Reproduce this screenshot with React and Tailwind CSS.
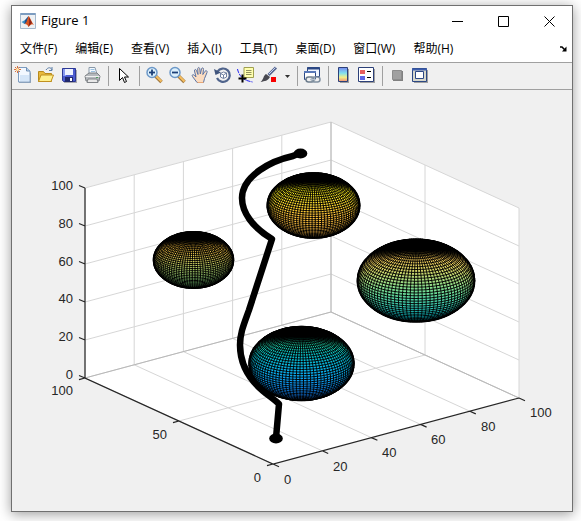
import React from "react";

const menus = [
  "文件(F)",
  "编辑(E)",
  "查看(V)",
  "插入(I)",
  "工具(T)",
  "桌面(D)",
  "窗口(W)",
  "帮助(H)",
];

// Screen position of a data point, every axis runs from 0 to 100
const project = (x, y, z) => [
  273 + 2.46 * x - 1.88 * y,
  464 - 0.66 * x - 0.86 * y - 1.9 * z,
];

const segment = (a, b) => {
  const [x1, y1] = project(...a);
  const [x2, y2] = project(...b);
  return `M${x1.toFixed(1)} ${y1.toFixed(1)}L${x2.toFixed(1)} ${y2.toFixed(1)}`;
};

const steps = [0, 20, 40, 60, 80, 100];

const spheres = [
  {
    id: "north",
    cx: 313.5,
    cy: 205.5,
    r: 15,
    colors: ["#fff81c", "#fcea28", "#ffc23a", "#f8b848"],
  },
  {
    id: "west",
    cx: 193.5,
    cy: 260,
    r: 13,
    colors: ["#ffc440", "#f0c84c", "#b8d46c", "#78d080"],
  },
  {
    id: "east",
    cx: 416,
    cy: 280.5,
    r: 19,
    colors: ["#f4c858", "#d4d468", "#6cdc98", "#08b4c4"],
  },
  {
    id: "south",
    cx: 301.5,
    cy: 363.5,
    r: 17,
    colors: ["#20cca0", "#08bcc4", "#0aa8ec", "#147cf4"],
  },
];

const MERIDIANS = 92;
const PARALLELS = 44;

// Only the half that faces the viewer is drawn
const meshPath = (cx, cy, r) => {
  let d = "";
  const trace = (points) => {
    let open = false;
    points.forEach(([lon, lat]) => {
      const x = Math.cos(lat) * Math.cos(lon);
      const y = Math.cos(lat) * Math.sin(lon);
      const z = Math.sin(lat);
      const visible = -1.88 * x - 2.46 * y + 1.767 * z > 0;
      if (visible) {
        const px = cx + r * (2.46 * x - 1.88 * y);
        const py = cy + r * (-0.66 * x - 0.86 * y - 1.9 * z);
        d += `${open ? "L" : "M"}${px.toFixed(1)} ${py.toFixed(1)}`;
      }
      open = visible;
    });
  };
  for (let i = 0; i < MERIDIANS; i++) {
    const lon = (i / MERIDIANS) * 2 * Math.PI;
    const points = [];
    for (let j = 0; j <= 48; j++) {
      points.push([lon, (j / 48 - 0.5) * Math.PI]);
    }
    trace(points);
  }
  for (let j = 1; j < PARALLELS; j++) {
    const lat = (j / PARALLELS - 0.5) * Math.PI;
    const points = [];
    for (let i = 0; i <= 96; i++) {
      points.push([(i / 96) * 2 * Math.PI, lat]);
    }
    trace(points);
  }
  return d;
};

const Sphere = ({ id, cx, cy, r, colors }) => {
  const rx = r * 3.1;
  const ry = r * 2.19;
  return (
    <g>
      <linearGradient id={id} x1="0" y1="0" x2="0" y2="1">
        <stop offset="0.13" stopColor="#000" />
        <stop offset="0.24" stopColor={colors[0]} />
        <stop offset="0.38" stopColor={colors[1]} />
        <stop offset="0.65" stopColor={colors[2]} />
        <stop offset="0.95" stopColor={colors[3]} />
      </linearGradient>
      <ellipse cx={cx} cy={cy} rx={rx} ry={ry} fill={`url(#${id})`} />
      <path
        d={meshPath(cx, cy, r)}
        fill="none"
        stroke="#000"
        strokeWidth="0.95"
      />
      <ellipse
        cx={cx}
        cy={cy}
        rx={rx - 0.5}
        ry={ry - 0.5}
        fill="none"
        stroke="#000"
        strokeWidth="2"
      />
    </g>
  );
};

const Label = ({ x, y, end, children }) => (
  <text x={x} y={y} textAnchor={end ? "end" : "start"}>
    {children}
  </text>
);

const Plot = () => {
  const grid = [
    ...steps.map((x) => segment([x, 100, 0], [x, 100, 100])),
    ...steps.map((x) => segment([x, 0, 0], [x, 100, 0])),
    ...steps.map((z) => segment([0, 100, z], [100, 100, z])),
    ...steps.map((z) => segment([100, 0, z], [100, 100, z])),
    segment([0, 50, 0], [100, 50, 0]),
    segment([100, 50, 0], [100, 50, 100]),
    segment([100, 0, 0], [100, 0, 100]),
  ].join("");

  const xTicks = steps.map((x) => {
    const [px, py] = project(x, 0, 0);
    return `M${px} ${py}l6 2.7`;
  });
  const yTicks = [0, 50, 100].map((y) => {
    const [px, py] = project(0, y, 0);
    return `M${px} ${py}l-6 1.7`;
  });
  const zTicks = steps.map((z) => {
    const [px, py] = project(0, 100, z);
    return `M${px} ${py}l-6 -2.5`;
  });

  return (
    <svg
      viewBox="12 90 560 421"
      className="h-full w-full font-['Liberation_Sans',Arial,sans-serif] text-[13px]"
      role="img"
      aria-label="3D plot"
    >
      <path
        d="M85 188L331 122L519 208V398L273 464L85 378Z"
        fill="#fff"
      />
      <path d={grid} fill="none" stroke="#d6d6d6" strokeWidth="1" />
      <path
        d="M85 378L331 312L519 398M331 312V122"
        fill="none"
        stroke="#b8b8b8"
        strokeWidth="1"
      />
      <path
        d={`M85 188V378L273 464L519 398${xTicks.join("")}${yTicks.join(
          ""
        )}${zTicks.join("")}`}
        fill="none"
        stroke="#262626"
        strokeWidth="1.2"
      />

      <g fill="#262626">
        <Label x="73" y="190" end>100</Label>
        <Label x="73" y="228" end>80</Label>
        <Label x="73" y="266" end>60</Label>
        <Label x="73" y="303" end>40</Label>
        <Label x="73" y="341" end>20</Label>
        <Label x="73" y="379" end>0</Label>
        <Label x="73" y="395" end>100</Label>
        <Label x="167" y="439" end>50</Label>
        <Label x="261" y="482" end>0</Label>
        <Label x="284" y="484">0</Label>
        <Label x="333" y="471">20</Label>
        <Label x="382" y="457">40</Label>
        <Label x="431" y="444">60</Label>
        <Label x="481" y="431">80</Label>
        <Label x="530" y="417">100</Label>
      </g>

      {spheres.map((s) => (
        <Sphere key={s.id} {...s} />
      ))}

      <path
        d="M300 153L293 156C284 158 270 163 260 170C250 177 242 187 242 198C242 212 252 227 272 239L249 310C244 324 240 333 240 345C240 364 250 380 263 391C269 396 275 400 279 404L276 438"
        fill="none"
        stroke="#000"
        strokeWidth="6.5"
        strokeLinejoin="round"
      />
      <ellipse cx="300.5" cy="153.5" rx="6.8" ry="5" />
      <ellipse cx="276" cy="438.5" rx="6.8" ry="5" />
    </svg>
  );
};

const Icon = ({ children }) => (
  <svg width="18" height="18" viewBox="0 0 18 18" fill="none">
    {children}
  </svg>
);

const NewIcon = () => (
  <Icon>
    <path d="M5 3h8l4 4v10H5z" fill="#9aa8b8" />
    <path d="M4.500 1.500h8l3.500 3.500v11h-11.500z" fill="#f2f8ff" stroke="#7d9cc0" />
    <path d="M6 9h9v6H6z" fill="#d5e6f8" />
    <path d="M12.500 1.500v3.500h3.500" fill="#b7cfe8" stroke="#6f8fb5" />
    <path d="M3.500 0v7M0 3.500h7M1 1l5 5M6 1L1 6" stroke="#d9703c" />
    <circle cx="3.500" cy="3.500" r="1.500" fill="#ffe6a8" />
  </Icon>
);

const OpenIcon = () => (
  <Icon>
    <path d="M9 4c2-3 5-3 6 0M15 1v3.500h-3" stroke="#5c7ea8" />
    <path d="M1.500 15.500v-10h5l1.500 2h6.500v8z" fill="#e8b93c" stroke="#b88a1c" />
    <path d="M1.500 15.500l2.500-6.500h12.500l-2.500 6.500z" fill="#fff08c" stroke="#c09020" />
  </Icon>
);

const SaveIcon = () => (
  <Icon>
    <path d="M4 4h13v13H4z" fill="#a8a8b0" />
    <path d="M2.500 2.500h13v13h-12l-1-1z" fill="#4c5cd0" stroke="#2c3894" />
    <path d="M3 3h3v7H3z" fill="#8898f0" />
    <path d="M5 3h8v6H5z" fill="#eef2ff" />
    <path d="M5 11h8v5H5z" fill="#20286c" />
    <path d="M10 12h2v3h-2z" fill="#fff" />
  </Icon>
);

const PrintIcon = () => (
  <Icon>
    <path d="M6 1.500h6l2 6.500H6z" fill="#f4faff" stroke="#8898a8" />
    <path d="M7.500 3.500h4M8 5.500h4" stroke="#9ac0e0" />
    <path d="M2 10l4-3h8l3 3-1 5H3z" fill="#b4b8bc" stroke="#7c8084" />
    <path d="M2.500 10.500h14" stroke="#f0f0f0" />
    <path d="M5 13h9l1 3.500H4z" fill="#e8e8e8" stroke="#808488" />
    <path d="M13 11.500h2" stroke="#50a060" />
  </Icon>
);

const PointerIcon = () => (
  <Icon>
    <path
      d="M5.500 2.500v12l3-3 2 5 2-1-2-4.500h4z"
      fill="#fff"
      stroke="#000"
    />
  </Icon>
);

const ZoomIcon = ({ plus }) => (
  <Icon>
    <path d="M10.500 10l6 6" stroke="#a07840" strokeWidth="3.500" />
    <path d="M11 10l5.500 5.500" stroke="#f8c060" strokeWidth="1.800" />
    <circle cx="7" cy="6.500" r="5" fill="#dcf0fc" stroke="#6c98c8" strokeWidth="1.500" />
    <path d="M4 6.500h6" stroke="#1c4078" strokeWidth="1.800" />
    {plus && <path d="M7 3.500v6" stroke="#1c4078" strokeWidth="1.800" />}
  </Icon>
);

const HandIcon = () => (
  <Icon>
    <path
      d="M6 16.500L1.500 10.500C.5 9 2 8 3.200 9.200L5 11 3.500 5C3.200 3.200 5 3 5.500 4.500L7 8.500 6.700 3C6.700 1 8.600 1 8.800 3L9.300 8 10.500 3C11 1.200 12.800 1.700 12.500 3.500L11.800 8.500 14 5.300C15 4 16.700 5 16 6.500L13.500 12.500 12.500 16.500z"
      fill="#fbdcc0"
      stroke="#5c74a4"
    />
    <path d="M6.500 16.500h6" stroke="#e8a878" />
  </Icon>
);

const RotateIcon = () => (
  <Icon>
    <path d="M3.500 5.500A6.700 6.700 0 1 1 3 12" stroke="#50648c" strokeWidth="2.200" />
    <path d="M0 3l1.500 6L7 6.500z" fill="#40547c" />
    <path d="M6.500 7.500l3-1.500 3 1v4l-3 1.500-3-1.500zM6.500 7.500l3 1.500v3M9.500 9l3-2" fill="#fff" stroke="#50648c" strokeWidth="0.800" />
  </Icon>
);

const DataCursorIcon = () => (
  <Icon>
    <path d="M.5 3c1 5 4 9 8 11 2 1 5 1.500 7 2" stroke="#2020f0" strokeDasharray="4 1" />
    <path d="M7 1.500h9.500v10H7z" fill="#ffffb0" stroke="#a0a050" />
    <path d="M9 4.500h5.500M9 6.500h5.500M9 8.500h5.500" stroke="#909060" />
    <path d="M1.500 12.500h8M5.500 8.500v8" stroke="#000" strokeWidth="2" />
  </Icon>
);

const BrushIcon = () => (
  <Icon>
    <path d="M16 1.500L8.500 9" stroke="#586890" strokeWidth="3" />
    <path d="M15.500 1.500L9 8" stroke="#c4d0f0" />
    <path d="M6 8l4 3c-2 4-5 4-9.500 5C4 13 3 10 6 8z" fill="#484850" />
    <path d="M11 11h5v5h-5z" fill="#f80000" />
  </Icon>
);

const LinkIcon = () => (
  <Icon>
    <path d="M4.500 1.500h12v9h-12z" fill="#f0f6ff" stroke="#2c4884" />
    <path d="M4 2.500h13" stroke="#2c4884" strokeWidth="2" />
    <path d="M1.500 5.500h11v8h-11z" fill="#fff" stroke="#2c4884" />
    <path d="M1 6h12" stroke="#5878b8" strokeWidth="2" />
    <rect x="3" y="11" width="8" height="5" rx="2.500" fill="#f0f0f0" stroke="#6c7c8c" strokeWidth="1.500" />
    <rect x="9" y="11" width="8" height="5" rx="2.500" stroke="#8090a0" strokeWidth="1.500" />
    <path d="M7 13.500h6" stroke="#b4c0cc" strokeWidth="1.500" />
  </Icon>
);

const ColorbarIcon = () => (
  <Icon>
    <linearGradient id="bar" x1="0" y1="0" x2="0" y2="1">
      <stop offset="0" stopColor="#7888f0" />
      <stop offset="0.4" stopColor="#80e0f0" />
      <stop offset="0.7" stopColor="#f4f088" />
      <stop offset="1" stopColor="#f09078" />
    </linearGradient>
    <path d="M6 3h9v14H6z" fill="#a0a0a0" />
    <path d="M4.500 1.500h9v14h-9z" fill="url(#bar)" stroke="#2c4078" />
  </Icon>
);

const LegendIcon = () => (
  <Icon>
    <path d="M3 3h15v14H3z" fill="#a0a0a0" />
    <path d="M1.500 1.500h15v14h-15z" fill="#fff" stroke="#2c4078" />
    <path d="M3 4h5v4H3z" fill="#e86060" />
    <path d="M3 10h5v4H3z" fill="#6068e8" />
    <path d="M10 5.500h4M10 11.500h4" stroke="#000" />
  </Icon>
);

const HideToolsIcon = () => (
  <Icon>
    <path d="M5 5h10v10H5z" fill="#808080" />
    <path d="M4.500 4.500h9v9h-9z" fill="#a0a0a0" stroke="#8c8c8c" />
  </Icon>
);

const ShowToolsIcon = () => (
  <Icon>
    <path d="M3 4h14v13H3z" fill="#a0a0a0" />
    <path d="M1.500 2.500h14v13h-14z" fill="#d8d8cc" stroke="#2c4884" />
    <path d="M1 3.500h15" stroke="#3c5cac" strokeWidth="2" />
    <path d="M4.500 5.500h8v7h-8z" fill="#fff" stroke="#2c4884" />
  </Icon>
);

const Logo = () => (
  <svg width="16" height="16" viewBox="0 0 16 16" aria-hidden="true">
    <path d="M.5.500h15v15H.5z" fill="#eef1f4" stroke="#a4b8cc" />
    <path d="M.5 1h15" stroke="#7c9cc0" strokeWidth="2" />
    <path d="M1.500 9l3.500-2 2 1.500L4.500 11z" fill="#3c94c8" />
    <path d="M5 7l3.500-4-1.500 7-2.500 1z" fill="#20508c" />
    <path d="M8.500 3c1.500 1 3 6 5.500 9-2-1.500-3-1-5.500 2-.5-1.500-1.500-3-4-3 2-.5 3-5 4-8z" fill="#d85420" />
    <path d="M8.500 3c1 2 1 6 0 11 2-3 3-4 3.500-4z" fill="#8c2418" />
  </svg>
);

const ToolButton = ({ label, children }) => (
  <button
    type="button"
    aria-label={label}
    className="flex h-6 w-[23px] shrink-0 items-start pl-0.5 pt-0.5 hover:bg-gray-200"
  >
    {children}
  </button>
);

const Separator = () => (
  <div className="flex h-5 w-2 shrink-0 justify-center">
    <div className="w-px bg-[#a0a0a0]" />
  </div>
);

const WindowButton = ({ label, children }) => (
  <button
    type="button"
    aria-label={label}
    className="flex w-[46px] items-center justify-center hover:bg-gray-200"
  >
    <svg width="11" height="11" viewBox="0 0 11 11" fill="none" stroke="#000">
      {children}
    </svg>
  </button>
);

const TitleBar = () => (
  <header className="flex h-[30px] shrink-0 bg-white pl-2">
    <div className="flex flex-1 items-center gap-[5px]">
      <Logo />
      <h1 className="text-[13px]">Figure 1</h1>
    </div>
    <WindowButton label="Minimize">
      <path d="M0 5.500h11" />
    </WindowButton>
    <WindowButton label="Maximize">
      <path d="M.5.500h10v10H.5z" />
    </WindowButton>
    <WindowButton label="Close">
      <path d="M.5.500l10 10M10.500.500l-10 10" />
    </WindowButton>
  </header>
);

const MenuBar = () => (
  <nav className="flex h-[27px] shrink-0 items-center border-b border-[#a0a0a0] bg-white pr-1 pl-2">
    <div className="flex flex-1 gap-[18px]">
      {menus.map((menu) => (
        <button key={menu} type="button" className="text-xs whitespace-nowrap">
          {menu}
        </button>
      ))}
    </div>
    <button type="button" aria-label="Dock">
      <svg width="9" height="8" viewBox="0 0 9 8" fill="none">
        <path d="M1 2h2l3.500 3.500" stroke="#000" strokeWidth="1.500" />
        <path d="M7.500 1.500v5H3z" fill="#000" />
      </svg>
    </button>
  </nav>
);

const ToolBar = () => (
  <div
    role="toolbar"
    className="flex h-[27px] shrink-0 items-center border-b border-[#a0a0a0] bg-[#f0f0f0]"
  >
    <ToolButton label="New"><NewIcon /></ToolButton>
    <ToolButton label="Open"><OpenIcon /></ToolButton>
    <ToolButton label="Save"><SaveIcon /></ToolButton>
    <ToolButton label="Print"><PrintIcon /></ToolButton>
    <Separator />
    <ToolButton label="Select"><PointerIcon /></ToolButton>
    <Separator />
    <ToolButton label="Zoom in"><ZoomIcon plus /></ToolButton>
    <ToolButton label="Zoom out"><ZoomIcon /></ToolButton>
    <ToolButton label="Pan"><HandIcon /></ToolButton>
    <ToolButton label="Rotate"><RotateIcon /></ToolButton>
    <ToolButton label="Data cursor"><DataCursorIcon /></ToolButton>
    <ToolButton label="Brush"><BrushIcon /></ToolButton>
    <button
      type="button"
      aria-label="Brush options"
      className="flex h-6 w-3 shrink-0 items-center justify-center"
    >
      <svg width="5" height="3" viewBox="0 0 5 3">
        <path d="M0 0h5L2.500 3z" fill="#303030" />
      </svg>
    </button>
    <Separator />
    <ToolButton label="Link plot"><LinkIcon /></ToolButton>
    <Separator />
    <ToolButton label="Colorbar"><ColorbarIcon /></ToolButton>
    <ToolButton label="Legend"><LegendIcon /></ToolButton>
    <Separator />
    <ToolButton label="Hide plot tools"><HideToolsIcon /></ToolButton>
    <ToolButton label="Show plot tools"><ShowToolsIcon /></ToolButton>
  </div>
);

const App = () => {
  return (
    <div className="flex h-screen overflow-hidden bg-white pt-[5px] pr-2 pb-[9px] pl-[11px] font-['Open_Sans','Noto_Sans_CJK_SC',sans-serif] text-black">
      <div className="flex min-w-0 flex-1 flex-col border border-[#707070] bg-[#f0f0f0] shadow-[0_2px_12px_rgba(0,0,0,0.4)]">
        <TitleBar />
        <MenuBar />
        <ToolBar />
        <main className="min-h-0 flex-1">
          <Plot />
        </main>
      </div>
    </div>
  );
};

export default App;
